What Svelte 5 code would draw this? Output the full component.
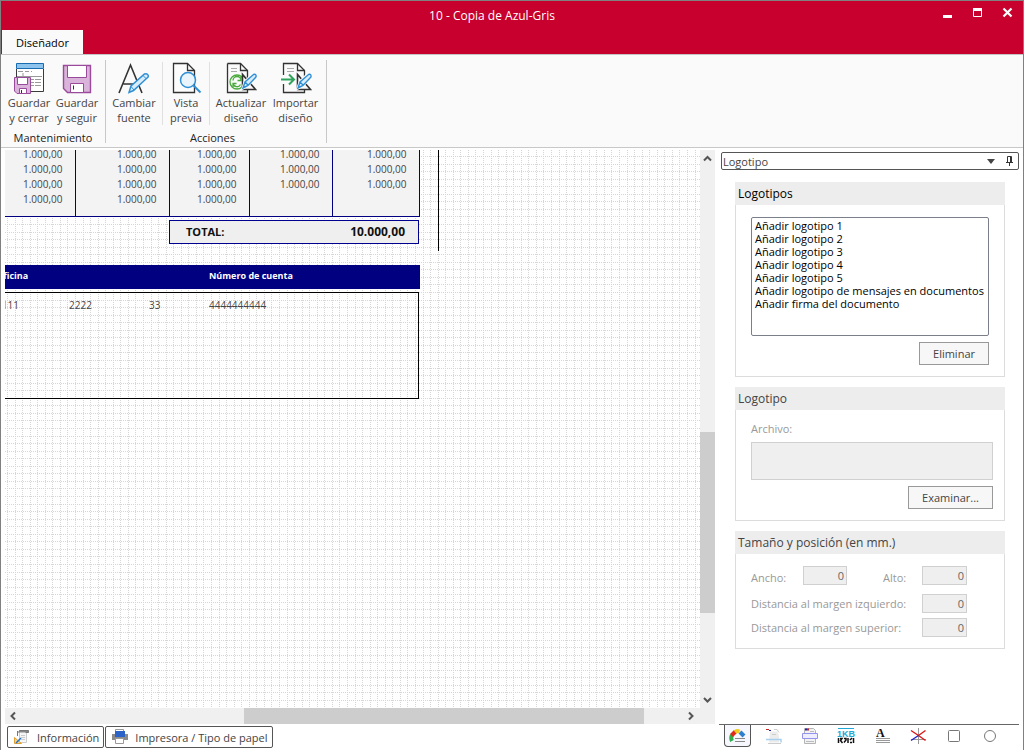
<script lang="ts">
  const amounts = [
    ['1.000,00', '1.000,00', '1.000,00', '1.000,00', '1.000,00'],
    ['1.000,00', '1.000,00', '1.000,00', '1.000,00', '1.000,00'],
    ['1.000,00', '1.000,00', '1.000,00', '1.000,00', '1.000,00'],
    ['1.000,00', '1.000,00', '1.000,00', '', '']
  ];

  const logos = [
    'Añadir logotipo 1',
    'Añadir logotipo 2',
    'Añadir logotipo 3',
    'Añadir logotipo 4',
    'Añadir logotipo 5',
    'Añadir logotipo de mensajes en documentos',
    'Añadir firma del documento'
  ];

  const tools = ['logo', 'text', 'print', 'field', 'label', 'line', 'rect', 'circle'];
  let activeTool = $state('logo');

  // grid lines every 2 mm, nine to a tile
  const gridLines = [0, 8, 15, 23, 30, 38, 45, 53, 60];
</script>

{#snippet ruler()}
  <path d="M17.5 12.5v15h13z" fill="#fafafa" stroke="#333" stroke-width="1.6" />
  <path d="M18 26l2-6 8-8 3 3-8 8z" fill="#d8ecfa" stroke="#fafafa" stroke-width="3" />
  <path d="M18 26l2-6 8.5-7.5q3-1 2.5 2.5l-8 8.5zM20 20l3 3" fill="#d8ecfa" stroke="#2f8fd4" stroke-width="1.4" />
{/snippet}

<div class="window">
  <header>
    <div class="titlebar">
      <h1>10 - Copia de Azul-Gris</h1>
      <div class="controls">
        <button aria-label="Minimizar">
          <svg width="12" height="12"><path d="M1 9.5h9" stroke="#fff" stroke-width="3" /></svg>
        </button>
        <button aria-label="Maximizar">
          <svg width="12" height="12"><path d="M1.5 2v7.5h8V2z" fill="none" stroke="#fff" /><path d="M1 2.5h9" stroke="#fff" stroke-width="3" /></svg>
        </button>
        <button aria-label="Cerrar">
          <svg width="12" height="12"><path d="M1.5 1.5l8 8M9.5 1.5l-8 8" stroke="#fff" stroke-width="2.2" /></svg>
        </button>
      </div>
    </div>
    <button class="ribbon-tab">Diseñador</button>
  </header>

  <div class="ribbon">
    <section class="maintenance">
      <div class="commands">
        <button>
          <svg width="32" height="32">
            <path d="M3.5 7v22.5h27V7" fill="#fff" stroke="#3a3a3a" />
            <path d="M3.5 1.5h27v5h-27z" fill="#8cc4ee" stroke="#1a6cb0" />
            <path d="M5 9.5h5m2 0h4m2 0h1M10 11v4M4 14.5h25M22 17.5h6M22 20.5h6M22 23.5h6M18 17.5h3M18 20.5h3M18 23.5h3" stroke="#999" />
            <path d="M1.5 15.5h16v16H4L1.5 29z" fill="#d9b3d9" stroke="#9a4a9a" />
            <path d="M4.5 15.5h10v7h-10zM6.5 26.5h7v5h-7z" fill="#fff" stroke="#9a4a9a" />
            <path d="M8.5 28v3" stroke="#333" />
          </svg>
          <span>Guardar<br />y cerrar</span>
        </button>
        <button>
          <svg width="32" height="32">
            <path d="M2.5 3.5h27v27h-23l-4-4z" fill="#d9b3d9" stroke="#9a4a9a" stroke-width="1.4" />
            <path d="M6.5 3.5h19v12h-19zM9.5 21.5h13v9h-13z" fill="#fff" stroke="#9a4a9a" />
            <path d="M12.5 23.5v4" stroke="#333" />
          </svg>
          <span>Guardar<br />y seguir</span>
        </button>
      </div>
      <h2>Mantenimiento</h2>
    </section>
    <section class="actions">
      <div class="commands">
        <button>
          <svg width="32" height="32">
            <path d="M1 31L12.5 3 24 31M5.500 22h15" fill="none" stroke="#333" stroke-width="1.6" />
            <path d="M11 30.5l2-6.500 13.500-12q2.500-1 3.500 1t-1 3L15.500 28.500z" fill="#d8ecfa" stroke="#2f8fd4" stroke-width="1.5" />
            <path d="M13 24.500l3 3.500M25 13.500l3.500 3.500" stroke="#2f8fd4" />
          </svg>
          <span>Cambiar<br />fuente</span>
        </button>
        <button>
          <svg width="32" height="32">
            <path d="M3.5 1.5h14l7 7v22h-21z" fill="#fcfcfc" stroke="#333" stroke-width="1.3" />
            <path d="M17.5 1.5v7h7" fill="none" stroke="#333" stroke-width="1.3" />
            <circle cx="18" cy="18" r="7.5" fill="#e9f4fc" stroke="#2f8fd4" stroke-width="1.5" />
            <path d="M23.5 23.5l7 7" stroke="#2f8fd4" stroke-width="2" />
          </svg>
          <span>Vista<br />previa</span>
        </button>
        <button>
          <svg width="32" height="32">
            <path d="M2.5 1.5h13l7 7v8M22.5 28v2.5h-20v-29" fill="none" stroke="#333" stroke-width="1.3" />
            <path d="M15.5 1.5v7h7" fill="none" stroke="#333" stroke-width="1.3" />
            <path d="M6 6.5h6M6 9.5h6" stroke="#aaa" />
            <circle cx="12" cy="20" r="7" fill="none" stroke="#4aaa3c" stroke-width="1.3" />
            <path d="M16 18.5a4 4 0 0 0-8 0M8 21.5a4 4 0 0 0 7.500 1M16 15v3.500h-3.500M8 25v-3.500h3.500" fill="none" stroke="#4aaa3c" stroke-width="1.3" />
            {@render ruler()}
          </svg>
          <span>Actualizar<br />diseño</span>
        </button>
        <button>
          <svg width="32" height="32">
            <path d="M3.5 13V1.5h14l7 7v8M24.5 28v2.5h-21V22" fill="none" stroke="#333" stroke-width="1.3" />
            <path d="M17.5 1.5v7h7" fill="none" stroke="#333" stroke-width="1.3" />
            <path d="M7 6.5h7M7 9.5h7" stroke="#aaa" />
            <path d="M1 17.500h13M9 12.500l5 5-5 5" fill="none" stroke="#2fa35c" stroke-width="2" />
            {@render ruler()}
          </svg>
          <span>Importar<br />diseño</span>
        </button>
      </div>
      <h2>Acciones</h2>
    </section>
  </div>

  <main>
    <div class="workspace">
      <div class="scroller">
        <div class="canvas">
          <svg class="grid" width="100%" height="100%">
            <pattern id="grid" x="2" y="6" width="68" height="68" patternUnits="userSpaceOnUse">
              {#each gridLines as line}
                <path d="M{line + 0.5} 0v68M0 {line + 0.5}h68" stroke="#d6d6d6" stroke-dasharray="1 1" />
              {/each}
            </pattern>
            <rect width="100%" height="100%" fill="url(#grid)" />
          </svg>

          <div class="document">
            <div class="totals">
              <table class="amounts">
                <colgroup><col class="c1" /><col class="c2" /><col class="c3" /><col class="c4" /><col class="c5" /></colgroup>
                <tbody>
                  {#each amounts as row}
                    <tr>
                      {#each row as amount}
                        <td>{amount}</td>
                      {/each}
                    </tr>
                  {/each}
                </tbody>
              </table>
              <div class="total"><span>TOTAL:</span><span class="sum">10.000,00</span></div>
            </div>
            <div class="bank head"><span>Oficina</span><span></span><span></span><span>Número de cuenta</span></div>
            <div class="bank body"><span>1111</span><span>2222</span><span>33</span><span>4444444444</span></div>
          </div>
        </div>

        <div class="vbar">
          <svg width="15" height="17"><path d="M4 10.5L7.5 7l3.5 3.5" /></svg>
          <div class="track"><div class="thumb"></div></div>
          <svg width="15" height="17"><path d="M4 7l3.5 3.5L11 7" /></svg>
        </div>
        <div class="hbar">
          <svg width="15" height="16"><path d="M10 4.500L6.500 8l3.500 3.500" /></svg>
          <div class="track"><div class="thumb"></div></div>
          <svg width="15" height="16"><path d="M4 4.500L7.500 8 4 11.500" /></svg>
        </div>
      </div>
      <nav class="pages">
        <button>
          <svg width="18" height="18">
            <path d="M6.5 3v11.5h7V4" fill="#f6f6f6" stroke="#ccc" />
            <path d="M5.500 4.500l1-2h9v2h-3M4.500 3v5" fill="#888" stroke="#777" />
            <path d="M8 7.500h4M8 9.500h4M8 11.500h4" stroke="#ccc" />
            <path d="M1.500 9.500v6h7z" fill="#f4d490" stroke="#e0a030" />
            <path d="M3 15l5-5" stroke="#2472c8" stroke-width="1.5" />
          </svg>
          Información
        </button>
        <button>
          <svg width="18" height="18">
            <path d="M4.500 5V1.500h8V5" fill="#fff" stroke="#999" />
            <path d="M1 6h16v6H1z" fill="#8a8a8a" />
            <path d="M4 3h10v6H4z" fill="#2b62c8" />
            <path d="M4.500 10.500h8v5h-8z" fill="#fff" stroke="#999" />
          </svg>
          Impresora / Tipo de papel
        </button>
      </nav>
    </div>

    <aside>
      <div class="picker">
        <select aria-label="Elemento">
          <option>Logotipo</option>
        </select>
        <svg width="8" height="5"><path d="M0 0h8L4 5z" fill="#444" /></svg>
        <button aria-label="Fijar panel">
          <svg width="9" height="11"><path d="M2.5 6V.5h4V6M5.5 1v5M1 6.5h7M4.5 7v3" fill="none" stroke="#333" /></svg>
        </button>
      </div>

      <div class="groups">
        <section class="group">
          <h3 class="current">Logotipos</h3>
          <div class="fields">
            <select class="logos" size="9" aria-label="Logotipos">
              {#each logos as logo}
                <option>{logo}</option>
              {/each}
            </select>
            <button class="push">Eliminar</button>
          </div>
        </section>

        <section class="group">
          <h3>Logotipo</h3>
          <div class="fields file">
            <label for="file">Archivo:</label>
            <textarea id="file" disabled></textarea>
            <button class="push">Examinar...</button>
          </div>
        </section>

        <section class="group">
          <h3>Tamaño y posición (en mm.)</h3>
          <div class="fields size">
            <label for="width">Ancho:</label>
            <input id="width" value="0" disabled />
            <label for="height">Alto:</label>
            <input id="height" value="0" disabled />
            <label class="wide" for="left">Distancia al margen izquierdo:</label>
            <input id="left" value="0" disabled />
            <label class="wide" for="top">Distancia al margen superior:</label>
            <input id="top" value="0" disabled />
          </div>
        </section>
      </div>

      <nav class="tools">
        {#each tools as tool}
          <button class:active={activeTool === tool} aria-label={tool} onclick={() => (activeTool = tool)}>
            <svg width="18" height="18">
              {#if tool === 'logo'}
                <path d="M3 14q-1.500-3 0-6" fill="none" stroke="#2fae4a" stroke-width="4" />
                <path d="M2.500 8.500l4-4" stroke="#e02a1c" stroke-width="4" />
                <path d="M6 5q2-1.500 4.500-.5" fill="none" stroke="#f4cc1c" stroke-width="4" />
                <path d="M11 5l4 4" stroke="#2f7fd0" stroke-width="4" />
                <path d="M6 11.500h10M6 14.500h10" stroke="#888" />
              {:else if tool === 'text'}
                <path d="M5 4.500h7l2 4v7H4z" fill="#ececec" />
                <path d="M1 2.500h3" stroke="#c22" /><path d="M4 3.500h2" stroke="#22a" />
                <path d="M9 2.500h3l2 3M7 7.500h4M3 16.500h13" fill="none" stroke="#ccc" />
                <path d="M1 12.500h15v3" fill="none" stroke="#a8d0ee" stroke-width="1.5" />
              {:else if tool === 'print'}
                <path d="M3.5 1.5h9l2 2v13h-11z" fill="#f2f2f2" stroke="#b4b4b4" />
                <path d="M4 2.5h2" stroke="#22a" stroke-width="2" /><path d="M6 2.5h2" stroke="#c22" stroke-width="2" />
                <path d="M9 4.5h4M5 8.500h8M5 14.500h8" stroke="#bbb" />
                <path d="M1.500 6.500h15v5h-15z" fill="#eeeeff" stroke="#9494ec" />
              {:else if tool === 'field'}
                <path d="M1 1.500h16" stroke="#22a8d4" />
                <text x="0" y="10" class="kb">1KB</text>
                <path d="M1.500 11v5M3 11.500h2l-1.500 2 2 2.500M7 11.500h2v1.500l-2 2.500M11 11v5M13 13l2-2M13 15.500h2M16.500 11v5" fill="none" stroke="#111" stroke-width="1.5" />
              {:else if tool === 'label'}
                <text x="3" y="10" class="serif">A</text>
                <path d="M3 11.500h14M3 13.500h14M3 15.500h14" stroke="#999" />
              {:else if tool === 'line'}
                <path d="M9.500 1v16M2 12.500h15" stroke="#999" />
                <path d="M2 3.500l7.500 5M9.500 8.500l7 5" stroke="#d11" stroke-width="1.3" />
                <path d="M2 13.500l7.500-5" stroke="#22c" stroke-width="1.3" />
                <path d="M9.500 8.500l7-5" stroke="#d11" stroke-width="1.3" />
              {:else if tool === 'rect'}
                <rect x="3.5" y="3.5" width="11" height="11" rx="1" fill="#fff" stroke="#777" />
              {:else}
                <circle cx="9" cy="9" r="5.5" fill="#fff" stroke="#777" />
              {/if}
            </svg>
          </button>
        {/each}
      </nav>
    </aside>
  </main>
</div>

<style>
  :global(body) {
    margin: 0;
    font-family: "Open Sans", "Noto Sans", sans-serif;
    font-size: 11px;
    line-height: 15px;
    color: #444;
  }

  * {
    box-sizing: border-box;
  }

  button, input, select, textarea {
    font: inherit;
    color: inherit;
    margin: 0;
  }

  button {
    border: none;
    background: none;
    padding: 0;
  }

  svg {
    display: block;
    flex: none;
  }

  h1, h2, h3 {
    margin: 0;
    font-size: 11px;
    font-weight: 400;
  }

  .window {
    display: flex;
    flex-direction: column;
    min-height: 100vh;
    border: 1px solid #808080;
    border-bottom: none;
    background: #fff;
  }

  header {
    background: #c8002d;
    color: #fff;
  }

  .titlebar {
    display: grid;
    grid-template-columns: 1fr auto 1fr;
    height: 29px;
    align-items: center;
  }

  .controls {
    display: flex;
    justify-content: flex-end;
    gap: 18px;
    padding: 0 9px 5px 0;
  }

  .titlebar h1 {
    grid-column: 2;
    padding-right: 40px;
    font-size: 12px;
  }

  .ribbon-tab {
    display: block;
    height: 24px;
    margin-left: 1px;
    padding: 0 14px;
    background: #fafafa;
    color: #000;
  }

  .ribbon {
    display: flex;
    height: 94px;
    padding: 5px 0 4px;
    background: #fafafa;
    border-top: 1px solid #c4c4c4;
    border-bottom: 1px solid #c8c8c8;
  }

  .ribbon section {
    display: flex;
    flex-direction: column;
    justify-content: space-between;
    border-right: 1px solid #c8c8c8;
  }

  .maintenance {
    padding: 0 4px;
  }

  .actions {
    padding-right: 7px;
  }

  .commands {
    display: flex;
    padding-top: 2px;
  }

  .commands button {
    display: flex;
    flex-direction: column;
    align-items: center;
    gap: 1px;
    min-width: 48px;
  }

  .actions .commands button {
    min-width: 47px;
  }

  .actions .commands button:nth-child(-n + 2) {
    border-right: 1px solid #e0e0e0;
  }

  .actions .commands button:first-child {
    min-width: 57px;
  }

  .actions .commands button:nth-child(3) {
    min-width: 62px;
  }

  .ribbon h2 {
    color: #222;
    line-height: 10px;
    text-align: center;
  }

  main {
    display: flex;
    flex: 1;
  }

  .workspace {
    display: flex;
    flex-direction: column;
    flex: 1;
    min-width: 0;
    padding: 2px 0 0 4px;
  }

  .scroller {
    display: grid;
    grid-template: 1fr 16px / 1fr 15px;
    flex: 1;
    background: #f0f0f0;
  }

  .canvas {
    position: relative;
    overflow: hidden;
    background: #fff;
  }

  .grid {
    position: absolute;
    inset: 0;
  }

  /* the page is scrolled a little past its left and top edges */
  .document {
    position: relative;
    width: 454px;
    margin: -3px 0 0 -20px;
    font-size: 10px;
  }

  .totals {
    height: 104px;
    border-right: 1px solid #000;
  }

  .amounts {
    table-layout: fixed;
    width: 434px;
    border-collapse: collapse;
    border-bottom: 1px solid #000080;
    background: #f3f3f3;
  }

  .c1 { width: 90px; }
  .c2 { width: 94px; }
  .c3 { width: 80px; }
  .c4 { width: 83px; }
  .c5 { width: 87px; }

  td {
    height: 15px;
    padding: 0 12px 0 0;
    border-right: 1px solid #000080;
    line-height: 9px;
    text-align: right;
  }

  tr:last-child td {
    padding-bottom: 9px;
    height: 24px;
  }

  .total {
    display: flex;
    justify-content: space-between;
    align-items: center;
    width: 250px;
    height: 24px;
    margin: 3px 0 0 184px;
    padding: 0 13px 0 16px;
    border: 1px solid #000090;
    background: #efefef;
    color: #111;
    font-size: 11px;
    font-weight: 700;
  }

  .sum {
    font-size: 12px;
  }

  .bank {
    display: grid;
    grid-template-columns: 73px 80px 60px 1fr;
    width: 435px;
  }

  .bank.head {
    height: 24px;
    margin: 14px 0 3px;
    padding: 3px 11px;
    background: #000080;
    color: #fff;
    font-size: 9px;
    font-weight: 700;
  }

  .bank.body {
    width: 434px;
    height: 107px;
    padding: 5px 10px;
    border: 1px solid #000;
  }

  .vbar, .hbar {
    display: flex;
  }

  .vbar {
    flex-direction: column;
  }

  .vbar path, .hbar path {
    fill: none;
    stroke: #555;
    stroke-width: 2;
  }

  .track {
    display: flex;
    flex: 1;
  }

  .track::before, .track::after {
    content: "";
  }

  .thumb {
    background: #cdcdcd;
  }

  .vbar .track { flex-direction: column; }
  .vbar .track::before { flex: 265; }
  .vbar .thumb { flex: 181; }
  .vbar .track::after { flex: 78; }

  .hbar .track::before { flex: 224; }
  .hbar .thumb { flex: 400; }
  .hbar .track::after { flex: 41; }

  .pages {
    display: flex;
    gap: 1px;
    padding: 2px;
    height: 26px;
  }

  .pages button {
    display: flex;
    align-items: center;
    gap: 6px;
    height: 22px;
    padding: 0 4px 0 5px;
    border: 1px solid #555;
    border-radius: 2px;
  }

  aside {
    display: flex;
    flex-direction: column;
    flex: none;
    width: 308px;
    padding: 4px 4px 3px;
  }

  .picker {
    display: flex;
    align-items: center;
    height: 18px;
    margin-left: 2px;
    padding-right: 4px;
    border: 1px solid #555;
    border-radius: 2px;
  }

  .picker select {
    flex: 1;
    appearance: none;
    height: 16px;
    padding: 0 1px;
    border: none;
    background: none;
  }

  .picker button {
    margin-left: 10px;
  }

  .groups {
    display: flex;
    flex-direction: column;
    gap: 10px;
    flex: 1;
    padding: 12px 14px 0 16px;
  }

  .group h3 {
    padding: 4px 3px;
    background: #ededed;
    font-size: 12px;
  }

  .group .current {
    color: #000;
  }

  .fields {
    display: flex;
    flex-direction: column;
    align-items: flex-end;
    gap: 6px;
    padding: 12px 15px 11px;
    border: 1px solid #dcdcdc;
    border-top: none;
  }

  .logos {
    width: 100%;
    height: 119px;
    padding: 0;
    border: 1px solid #7a7f8a;
    background: #fff;
    color: #000;
    overflow: hidden;
    scrollbar-width: none;
  }

  .logos option {
    height: 13px;
    min-height: 13px;
    padding: 0 3px;
    line-height: 13px;
  }

  .push {
    height: 23px;
    padding: 0 13px;
    border: 1px solid #999;
    background: #f7f7f7;
  }

  label {
    color: #999;
  }

  .file {
    padding-top: 11px;
    padding-right: 11px;
  }

  .file label {
    align-self: flex-start;
  }

  textarea, input {
    border: 1px solid #d0d0d0;
    background: #efefef;
    color: #666;
  }

  textarea {
    width: 100%;
    height: 38px;
    resize: none;
  }

  .size {
    display: grid;
    grid-template-columns: 52px 44px 1fr 45px;
    align-items: center;
    gap: 5px 0;
    padding-right: 37px;
  }

  .size label:nth-of-type(2) {
    padding-left: 36px;
  }

  .size .wide {
    grid-column: span 3;
  }

  input {
    width: 100%;
    height: 19px;
    padding: 0 2px;
    text-align: right;
  }

  #width, #height {
    margin-bottom: 4px;
  }

  .tools {
    display: flex;
    gap: 9px;
    padding-left: 5px;
    border-top: 1px solid #666;
  }

  .tools button {
    display: flex;
    align-items: center;
    justify-content: center;
    width: 27px;
    height: 22px;
    border: 1px solid transparent;
    border-top: none;
  }

  .tools .active {
    border-color: #555;
    border-radius: 0 0 4px 4px;
    background: #f7f7ff;
  }

  .kb {
    fill: #22a8d4;
    font: 700 9px "Liberation Sans", sans-serif;
  }

  .serif {
    fill: #111;
    font: 700 12px "Liberation Serif", serif;
  }
</style>
